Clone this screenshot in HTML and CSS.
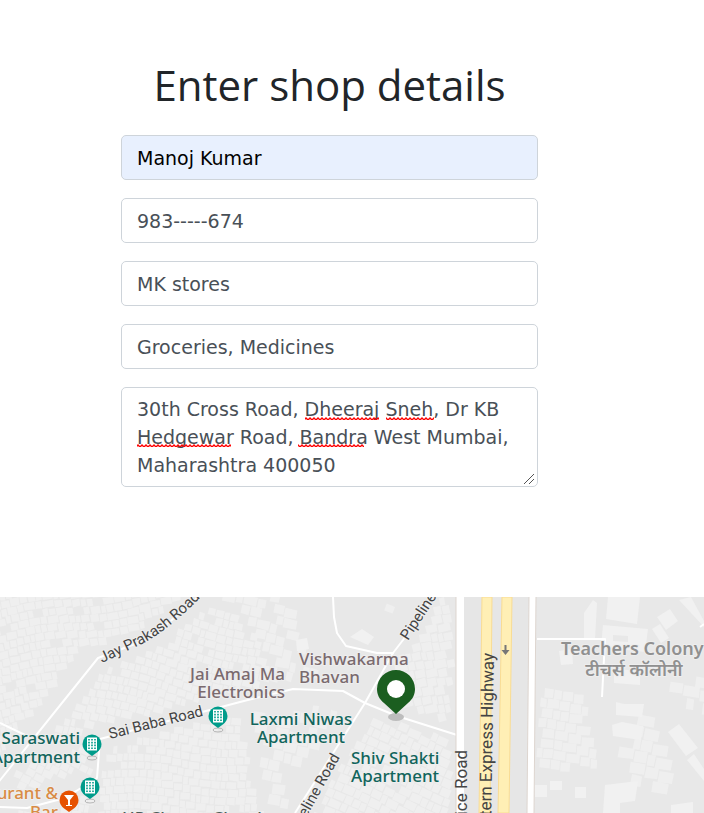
FILE: index.html
```html
<!DOCTYPE html>
<html lang="en">
<head>
<meta charset="utf-8">
<meta name="viewport" content="width=device-width, initial-scale=1">
<title>Enter shop details</title>
<link rel="stylesheet" href="styles.css">
</head>
<body>
<main class="page">
  <form class="shop-form">
    <h1 class="title">Enter shop details</h1>
    <input class="field field-autofill" type="text" aria-label="Name" value="Manoj Kumar">
    <input class="field" type="text" aria-label="Phone" value="983-----674">
    <input class="field" type="text" aria-label="Shop name" value="MK stores">
    <input class="field" type="text" aria-label="Categories" value="Groceries, Medicines">
    <div class="address">
      <textarea class="field field-area" aria-label="Address" rows="3" spellcheck="false">30th Cross Road, Dheeraj Sneh, Dr KB Hedgewar Road, Bandra West Mumbai, Maharashtra 400050</textarea>
      <svg class="field-marks" viewBox="0 0 417 100" aria-hidden="true">
        <defs>
          <pattern id="squiggle" width="4" height="3" patternUnits="userSpaceOnUse">
            <path d="M-1 3 1 1 3 3 5 1" fill="none" stroke="#f00" stroke-width="1.400"/>
          </pattern>
        </defs>
        <path d="M184 30h74v3h-74zM265 30h48v3h-48zM16 57h94v3H16zM177 57h66v3h-66z" fill="url(#squiggle)"/>
        <path d="M403 97 413 87M408 97 413 92" stroke="#555"/>
      </svg>
    </div>
  </form>
  <section class="map" aria-label="Shop location">
    <svg class="map-canvas" viewBox="0 0 704 216" preserveAspectRatio="xMidYMin slice">
      <defs>
        <path id="jay" d="M102 66 L140 48 Q172 32 212 -12"/>
        <g id="building">
          <ellipse cx="0" cy="14" rx="5" ry="2" fill="none" stroke="#b5b5b5"/>
          <path d="M-9.500 0a9.500 9.500 0 1 1 19 0c0 4-2 6-4 8L0 12l-5.500-4c-2-2-4-4-4-8z" fill="#009b8a"/>
          <path d="M-5 -6.500H5V6.500H-5z" fill="#fff"/>
          <path d="M-3 -5v10M0 -5v10M3 -5v10" stroke="#009b8a" stroke-width="1.600" stroke-dasharray="1.600 1.200"/>
        </g>
      </defs>
      <rect width="704" height="216" fill="#e8e8e8"/>
      <g id="blocks" fill="#efefef"></g>
      <g fill="#f1f1f1">
        <path d="M608 0h32l-3 27-31-5zM603 28l45 4-3 23-44-5zM657 20l13-8 8 12-12 9zM652 32l8-5 9 14-8 5zM679 3l12-3 13 24v6zM616 105l8 2h20l-2 13-26-2zM612 128l10-3 21 4-2 14-28-4zM668 135l11-8 19 24-12 8zM687 163l7-6 10 15v12zM605 188l33-4-3 20-15 2v10h-17z"/>
        <path d="M559 54l13-2 1 15-12 1zM584 16l9-13 4 3-2 36-11-1zM535 188h12v12h-12zM550 184h12v9h-12zM575 190h11v11h-11zM671 208l22-3v11h-22zM614 72l26 2v14l-26-2zM350 40l12-8 12 8-6 8zM296 43l11-2 2 11-12 2z"/>
      </g>
      <path d="M613 38l15 1v6l-15-1z" fill="#e8e8e8"/>
      <g class="road">
        <path d="M-3 187 98 61 140 45 Q170 28 202 -4M0 126 25 138"/>
        <path d="M0 210 27 211 65 201 97 181 100 142 240 105 293 92 343 94 365 106 397 119 457 138"/>
        <path d="M333 0 334 20 337 36 346 49 377 56 394 56M295 216 365 106 393 56 403 43 436 -4"/>
        <path d="M537 42H605L602 100M704 27 700 30"/>
      </g>
      <path d="M464 0H529L527 216H464z" fill="#e6e6e6"/>
      <path d="M456 0h8v216h-8zM529 0h7l-2 216h-7z" fill="#fff"/>
      <path d="M456 0v216M536 0l-2 216M529 0l-2 216" class="edge"/>
      <path d="M482 0h10l-2 216h-11zM502 0h10l-3 216h-11z" class="highway"/>
      <path d="M504.500 48h2v5h3l-4 5-4-5h3z" fill="#777"/>

      <g class="road-name">
        <text><textPath href="#jay">Jay Prakash Road</textPath></text>
        <text transform="translate(110 142) rotate(-14)">Sai Baba Road</text>
        <text transform="translate(408 44) rotate(-57)">Pipeline Road</text>
        <text transform="translate(340 160) rotate(-61)" text-anchor="end">Pipeline Road</text>
        <text class="major" transform="translate(467 153) rotate(-90)" text-anchor="end">Service Road</text>
        <text class="major" transform="translate(494 56) rotate(-89)" text-anchor="end">Western Express Highway</text>
      </g>
      <g class="place" fill="#7a6a6e">
        <text x="285" y="83" text-anchor="end">Jai Amaj Ma</text>
        <text x="285" y="101" text-anchor="end">Electronics</text>
        <text x="299" y="68">Vishwakarma</text>
        <text x="299" y="86">Bhavan</text>
      </g>
      <g class="place" fill="#12655c">
        <text x="301" y="128" text-anchor="middle">Laxmi Niwas</text>
        <text x="301" y="146" text-anchor="middle">Apartment</text>
        <text x="351" y="167">Shiv Shakti</text>
        <text x="351" y="185">Apartment</text>
        <text x="80" y="147" text-anchor="end">Saraswati</text>
        <text x="80" y="166" text-anchor="end">Apartment</text>
      </g>
      <g class="place" fill="#d98b45" text-anchor="end">
        <text x="58" y="202">Restaurant &amp;</text>
        <text x="58" y="221">Bar</text>
      </g>
      <text class="place" x="122" y="227" fill="#4c5c59">HP Charan Chawl</text>
      <g class="district">
        <text x="561" y="58">Teachers Colony</text>
        <text x="634" y="79" text-anchor="middle">टीचर्स कॉलोनी</text>
      </g>
      <use href="#building" x="92" y="147"/>
      <use href="#building" x="90" y="190"/>
      <use href="#building" x="218" y="119"/>
      <g transform="translate(69 203)">
        <path d="M-9.500 0a9.500 9.500 0 1 1 19 0c0 4-2 6-4 8L0 12l-5.500-4c-2-2-4-4-4-8z" fill="#e65100"/>
        <path d="M-5 -5H5L1 0v5h2v1h-6v-1h2V0z" fill="#fff"/>
      </g>
      <ellipse cx="396" cy="120" rx="8" ry="4" fill="#bdbdbd"/>
      <path d="M396 117 384 106C379 102 377 97 377 92a19 19 0 0 1 38 0c0 5-2 10-7 14z" fill="#1b5e20"/>
      <circle cx="396" cy="92" r="9" fill="#fff"/>
    </svg>
  </section>
</main>
<script src="map.js"></script>
</body>
</html>
```
FILE: styles.css
```css
* { box-sizing: border-box; }

body {
  margin: 0;
  background: #fff;
  color: #212529;
  font-family: "DejaVu Sans", sans-serif;
}

.page {
  display: flex;
  flex-direction: column;
  min-height: 100vh;
}

.shop-form {
  display: flex;
  flex-direction: column;
  align-items: center;
  gap: 18px;
  padding: 57px 45px 110px 0;
}

.title {
  margin: 0 0 4px;
  font: 400 42px/56px "Open Sans", sans-serif;
  text-align: center;
}

.field {
  display: block;
  width: 100%;
  max-width: 417px;
  height: 45px;
  margin: 0;
  padding: 7px 15px;
  border: 1px solid #ced4da;
  border-radius: 5px;
  background: #fff;
  color: #495057;
  font: 400 19px/28px "DejaVu Sans", sans-serif;
}

.field-autofill {
  background: #e8f0fe;
  color: #000;
}

.address {
  display: grid;
  width: 100%;
  max-width: 417px;
}

.field-area {
  grid-area: 1 / 1;
  height: 100px;
  overflow: hidden;
  resize: none;
}

.field-marks {
  grid-area: 1 / 1;
  width: 100%;
  height: 100px;
  pointer-events: none;
}

.map {
  display: flex;
  flex: 1;
  min-height: 200px;
  overflow: hidden;
}

.map-canvas {
  display: block;
  width: 100%;
}

.road {
  fill: none;
  stroke: #fff;
  stroke-width: 2;
  stroke-linejoin: round;
}

.edge { fill: none; stroke: #ddd5cf; }
.highway { fill: #ffefb5; stroke: #f9dc93; }

.map text {
  paint-order: stroke;
  stroke: #eee;
  stroke-width: 2px;
  stroke-linejoin: round;
}

.road-name { font: 400 15px "Roboto", sans-serif; fill: #444; }
.road-name .major { font-size: 17px; stroke: none; }
.place { font: 500 17px "Noto Sans", sans-serif; }
.district { font: 600 18px "Noto Sans", sans-serif; fill: #909090; }
```
FILE: map.js
```js
// Fills each neighbourhood with a slightly irregular grid of building plots.
const blocks = document.getElementById("blocks");
let seed = 7;
const random = () => (seed = (seed * 16807) % 2147483647) / 2147483647;

// [outline, grid angle in degrees, plot size, share of plots that are built]
const areas = [
  [[[-10, -10], [200, -10], [140, 38], [88, 54], [50, 104], [-10, 172]], -10, 8, 0.97],
  [[[206, 8], [250, 20], [285, 84], [230, 102], [96, 136], [30, 160], [104, 68], [150, 52]], 14, 8, 0.93],
  [[[104, 148], [240, 112], [268, 226], [96, 226]], 3, 8, 0.97],
  [[[-10, 200], [28, 160], [92, 142], [94, 178], [-10, 206]], 25, 8, 0.9],
  [[[-10, 215], [60, 208], [96, 190], [96, 226], [-10, 226]], 10, 8, 0.9],
  [[[242, 110], [350, 100], [300, 190], [285, 226], [268, 226]], 10, 11, 0.65],
  [[[205, -10], [290, -10], [327, 90], [285, 85]], 12, 10, 0.6],
  [[[373, 114], [454, 141], [454, 226], [305, 226]], 24, 9, 0.97],
  [[[434, 2], [456, -10], [456, 134], [368, 102]], -12, 9, 0.97],
  [[[376, 4], [402, 0], [392, 28], [380, 30]], 20, 8, 0.8],
  [[[536, 88], [585, 93], [608, 150], [600, 174], [536, 182]], 5, 10, 0.97],
  [[[600, 145], [655, 105], [675, 165], [672, 205], [640, 208]], 10, 12, 0.9],
  [[[668, 85], [714, 75], [714, 122], [670, 110]], 8, 12, 0.9]
];

function inside(x, y, outline) {
  let hit = false;
  outline.forEach(([ax, ay], i) => {
    const [bx, by] = outline[(i + 1) % outline.length];
    if ((ay > y) !== (by > y) && x < ((bx - ax) * (y - ay)) / (by - ay) + ax) hit = !hit;
  });
  return hit;
}

let d = "";
for (const [outline, angle, size, density] of areas) {
  const cx = outline.reduce((sum, p) => sum + p[0], 0) / outline.length;
  const cy = outline.reduce((sum, p) => sum + p[1], 0) / outline.length;
  const turn = (angle * Math.PI) / 180;
  for (let v = -200; v < 200; v += size) {
    let u = -200 + random() * size;
    while (u < 200) {
      const w = size * (0.6 + random() * 0.9);
      const corners = [[u, v], [u + w - 1, v], [u + w - 1, v + size - 1], [u, v + size - 1]]
        .map(([a, b]) => [a + random() * 0.6, b + Math.sin(u / 25) * 4 + random()])
        .map(([a, b]) => [cx + a * Math.cos(turn) - b * Math.sin(turn), cy + a * Math.sin(turn) + b * Math.cos(turn)]);
      u += w;
      if (random() < density && corners.every(([x, y]) => inside(x, y, outline))) {
        d += "M" + corners.map(p => p.map(n => n.toFixed(1)).join(" ")).join("L") + "Z";
      }
    }
  }
}
const plots = document.createElementNS("http://www.w3.org/2000/svg", "path");
plots.setAttribute("d", d);
blocks.append(plots);
```
